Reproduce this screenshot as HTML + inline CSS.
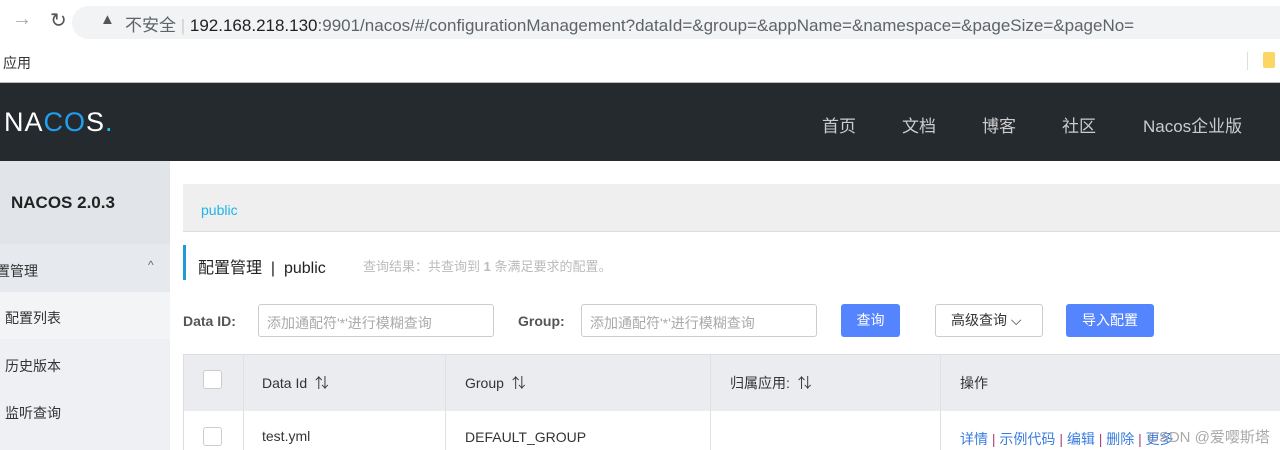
<!DOCTYPE html>
<html><head><meta charset="utf-8"><style>
*{box-sizing:border-box;margin:0;padding:0}
body{width:1280px;height:450px;overflow:hidden;background:#fff;font-family:"Liberation Sans","Noto Sans CJK SC",sans-serif;position:relative;color:#333}
.abs{position:absolute}
</style></head><body>
<div class="abs" style="left:0;top:0;width:1280px;height:45px;background:#fff"></div>
<div class="abs" style="left:12px;top:8px;font-size:20px;color:#aaa">→</div>
<div class="abs" style="left:50px;top:8px;font-size:20px;color:#555">↻</div>
<div class="abs" style="left:72px;top:6px;width:1208px;height:33px;background:#f1f3f4;border-radius:17px 0 0 17px"></div>
<div class="abs" style="left:100px;top:11px;font-size:15px;color:#555">▲</div>
<div class="abs" style="left:125px;top:11px;font-size:17px;color:#5f6368;white-space:nowrap">不安全 <span style="color:#ccc">|</span> <span style="color:#202124">192.168.218.130</span>:9901/nacos/#/configurationManagement?dataId=&amp;group=&amp;appName=&amp;namespace=&amp;pageSize=&amp;pageNo=</div>
<div class="abs" style="left:3px;top:53px;font-size:14px;color:#333">应用</div>
<div class="abs" style="left:1247px;top:52px;width:1px;height:18px;background:#ddd"></div>
<div class="abs" style="left:1263px;top:52px;width:12px;height:16px;background:#fcd663;border-radius:2px"></div>
<div class="abs" style="left:0;top:82px;width:1280px;height:1px;background:#bbb"></div>
<div class="abs" style="left:0;top:83px;width:1280px;height:78px;background:#252a2f"></div>
<div class="abs" style="left:4px;top:107px;font-size:27px;color:#fff;letter-spacing:1px">NA<span style="color:#1fa0ef">CO</span>S<span style="color:#20c6e8">.</span></div>
<div class="abs" style="left:822px;top:112px;font-size:17px;color:#ccc">首页</div>
<div class="abs" style="left:902px;top:112px;font-size:17px;color:#ccc">文档</div>
<div class="abs" style="left:982px;top:112px;font-size:17px;color:#ccc">博客</div>
<div class="abs" style="left:1062px;top:112px;font-size:17px;color:#ccc">社区</div>
<div class="abs" style="left:1143px;top:112px;font-size:17px;color:#ccc">Nacos企业版</div>
<div class="abs" style="left:0;top:161px;width:170px;height:289px;background:#eef0f3"></div>
<div class="abs" style="left:0;top:161px;width:170px;height:83px;background:#e1e4e8"></div>
<div class="abs" style="left:11px;top:193px;font-size:17px;font-weight:bold;color:#222">NACOS 2.0.3</div>
<div class="abs" style="left:0;top:244px;width:170px;height:48px;background:#e6e9ed"></div>
<div class="abs" style="left:-4px;top:261px;font-size:14px;color:#333">置管理</div>
<div class="abs" style="left:148px;top:258px;font-size:12px;color:#666">^</div>
<div class="abs" style="left:0;top:292px;width:170px;height:47px;background:#f3f4f6"></div>
<div class="abs" style="left:5px;top:308px;font-size:14px;color:#333">配置列表</div>
<div class="abs" style="left:5px;top:356px;font-size:14px;color:#333">历史版本</div>
<div class="abs" style="left:5px;top:403px;font-size:14px;color:#333">监听查询</div>
<div class="abs" style="left:183px;top:184px;width:1097px;height:48px;background:#efefef;border-bottom:1px solid #ddd"></div>
<div class="abs" style="left:201px;top:202px;font-size:14px;color:#1fb4e8">public</div>
<div class="abs" style="left:183px;top:245px;width:3px;height:35px;background:#209bd7"></div>
<div class="abs" style="left:198px;top:254px;font-size:16px;color:#222">配置管理 &nbsp;| &nbsp;public</div>
<div class="abs" style="left:363px;top:256px;font-size:13px;color:#bbb">查询结果：共查询到 <b>1</b> 条满足要求的配置。</div>
<div class="abs" style="left:183px;top:313px;font-size:14px;font-weight:bold;color:#555">Data ID:</div>
<div class="abs" style="left:258px;top:304px;width:236px;height:33px;border:1px solid #ccc;border-radius:3px;font-size:14px;color:#aaa;padding:8px 8px">添加通配符'*'进行模糊查询</div>
<div class="abs" style="left:518px;top:313px;font-size:14px;font-weight:bold;color:#555">Group:</div>
<div class="abs" style="left:581px;top:304px;width:236px;height:33px;border:1px solid #ccc;border-radius:3px;font-size:14px;color:#aaa;padding:8px 8px">添加通配符'*'进行模糊查询</div>
<div class="abs" style="left:841px;top:304px;width:59px;height:33px;background:#5584ff;border-radius:3px;color:#fff;font-size:14px;text-align:center;line-height:33px">查询</div>
<div class="abs" style="left:935px;top:304px;width:108px;height:33px;border:1px solid #ccc;border-radius:3px;color:#333;font-size:14px;padding-left:15px;line-height:31px">高级查询 ⌵</div>
<div class="abs" style="left:1066px;top:304px;width:88px;height:33px;background:#5584ff;border-radius:3px;color:#fff;font-size:14px;text-align:center;line-height:33px">导入配置</div>
<div class="abs" style="left:183px;top:354px;width:1097px;height:57px;background:#ebecf0;border-top:1px solid #ddd"></div>
<div class="abs" style="left:183px;top:354px;width:1px;height:96px;background:#ddd"></div>
<div class="abs" style="left:243px;top:354px;width:1px;height:96px;background:#e0e0e0"></div>
<div class="abs" style="left:445px;top:354px;width:1px;height:96px;background:#e0e0e0"></div>
<div class="abs" style="left:710px;top:354px;width:1px;height:96px;background:#e0e0e0"></div>
<div class="abs" style="left:940px;top:354px;width:1px;height:96px;background:#e0e0e0"></div>
<div class="abs" style="left:203px;top:370px;width:19px;height:19px;border:1px solid #ccc;border-radius:3px;background:#fff"></div>
<div class="abs" style="left:203px;top:427px;width:19px;height:19px;border:1px solid #ccc;border-radius:3px;background:#fff"></div>
<div class="abs" style="left:262px;top:373px;font-size:14px;color:#333">Data Id &nbsp;⇅</div>
<div class="abs" style="left:465px;top:373px;font-size:14px;color:#333">Group &nbsp;⇅</div>
<div class="abs" style="left:730px;top:373px;font-size:14px;color:#333">归属应用: &nbsp;⇅</div>
<div class="abs" style="left:960px;top:373px;font-size:14px;color:#333">操作</div>
<div class="abs" style="left:262px;top:428px;font-size:14px;color:#333">test.yml</div>
<div class="abs" style="left:465px;top:429px;font-size:14px;color:#333">DEFAULT_GROUP</div>
<div class="abs" style="left:960px;top:429px;font-size:14px;color:#3a7ce0">详情 <span style="color:#a47">|</span> 示例代码 <span style="color:#a47">|</span> 编辑 <span style="color:#a47">|</span> 删除 <span style="color:#a47">|</span> 更多</div>
<div class="abs" style="left:1148px;top:426px;font-size:15px;color:#aaa">CSDN @爱嘤斯塔</div>
</body></html>
